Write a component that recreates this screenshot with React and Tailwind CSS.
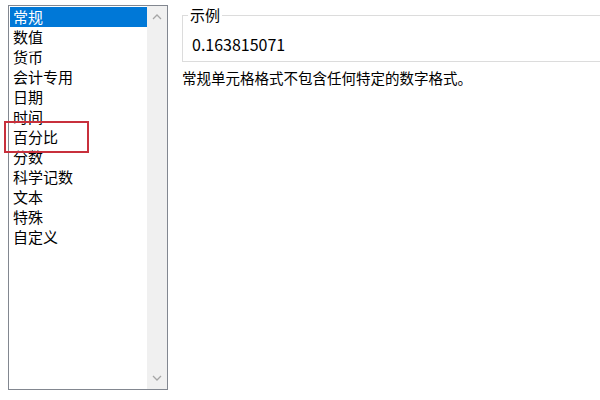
const items = ["常规", "数值", "货币", "会计专用", "日期", "时间", "百分比", "分数", "科学记数", "文本", "特殊", "自定义"];

const font = { fontFamily: '"Noto Sans CJK SC", "Liberation Sans", sans-serif' };

export default function App() {
  return (
    <div className="flex h-[400px] w-[600px] overflow-hidden bg-white text-black" style={font}>
      <div className="relative ml-[8px] mt-[5px] flex h-[385px] w-[160px] shrink-0 border border-[#828790] bg-white">
        <ul className="flex-1 pt-[1px] pl-[1px] text-[15px] leading-[20px]">
          {items.map((it, i) => (
            <li
              key={it}
              className={
                i === 0
                  ? "h-[20px] bg-[#0078d7] pl-[3px] text-white"
                  : "h-[20px] pl-[3px]"
              }
            >
              {it}
            </li>
          ))}
        </ul>
        <div className="flex w-[20px] flex-col items-center justify-between bg-[#f0f0f0] py-[8px]">
          <svg width="10" height="6" viewBox="0 0 10 6">
            <path d="M1 5 L5 1 L9 5" fill="none" stroke="#a6a6a6" strokeWidth="1.3" />
          </svg>
          <svg width="10" height="6" viewBox="0 0 10 6">
            <path d="M1 1 L5 5 L9 1" fill="none" stroke="#a6a6a6" strokeWidth="1.3" />
          </svg>
        </div>
        <div className="absolute left-[-5px] top-[115px] h-[32px] w-[85px] border-2 border-[#c8303c]" />
      </div>
      <div className="ml-[14px] flex flex-1 flex-col pt-[6px]">
        <fieldset className="mr-[-20px] h-[56px] border border-[#dcdcdc] px-[5px]">
          <legend className="px-[2px] text-[15px] leading-[18px]">示例</legend>
          <div className="pl-[4px] pt-[10px] text-[16px] leading-[20px]">0.163815071</div>
        </fieldset>
        <p className="mt-[6px] text-[14.5px] leading-[20px]">常规单元格格式不包含任何特定的数字格式。</p>
      </div>
    </div>
  );
}
